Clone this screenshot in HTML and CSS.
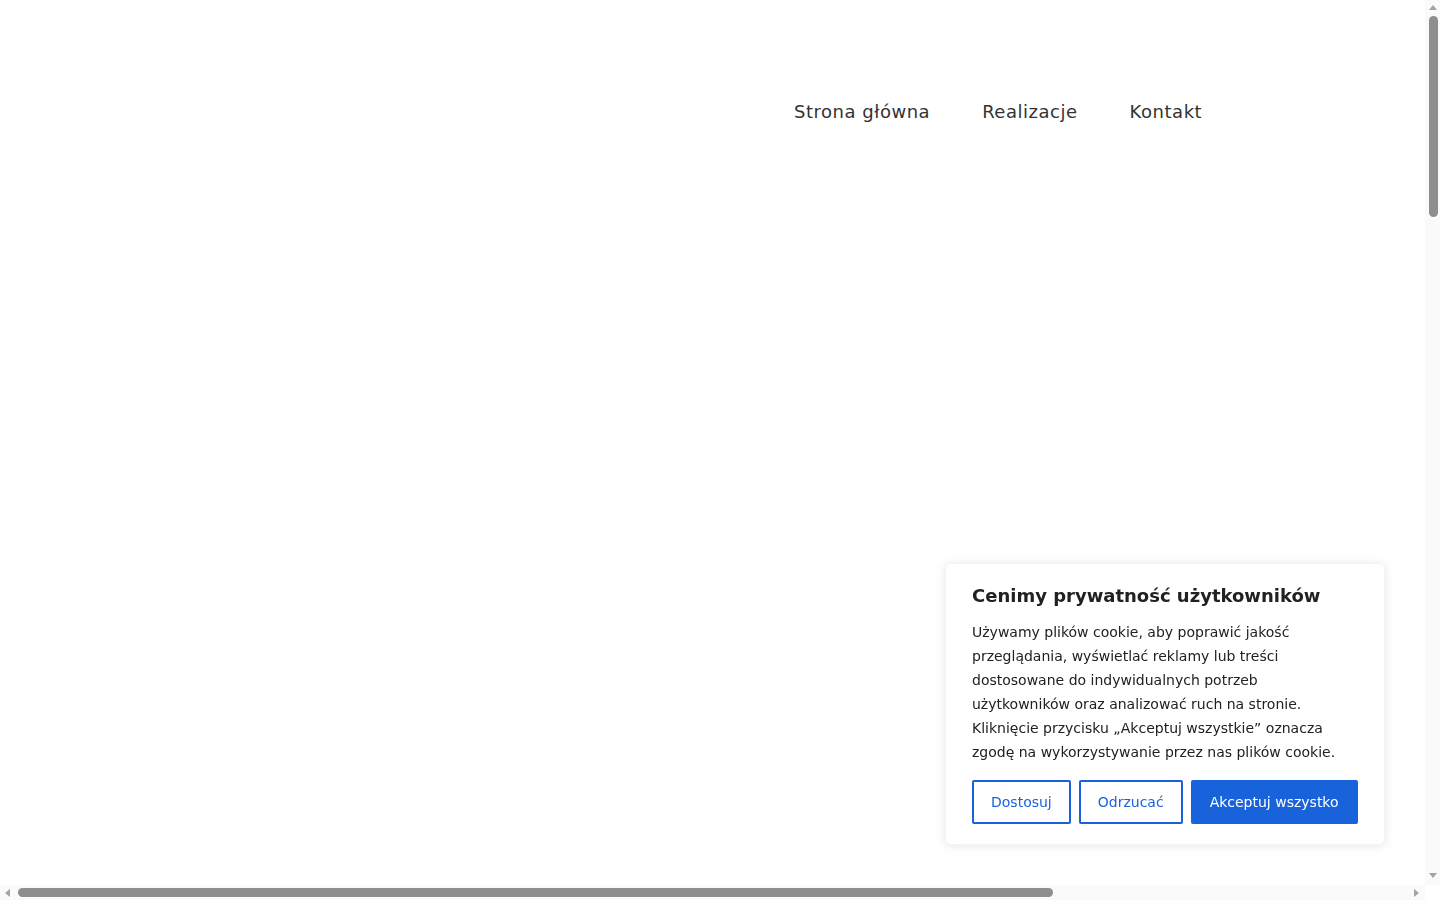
FILE: index.html
```html
<!DOCTYPE html>
<html lang="pl">
<head>
<meta charset="utf-8">
<title>Strona główna</title>
<link rel="stylesheet" href="styles.css">
</head>
<body>
<div class="page">
  <header class="site-header">
    <div class="logo"></div>
    <nav class="main-nav">
      <a href="#" class="nav-link">Strona główna</a>
      <a href="#" class="nav-link">Realizacje</a>
      <a href="#" class="nav-link">Kontakt</a>
    </nav>
  </header>
  <main class="content"></main>
</div>

<div class="cookie-banner">
  <h2 class="cookie-title">Cenimy prywatność użytkowników</h2>
  <p class="cookie-text">Używamy plików cookie, aby poprawić jakość przeglądania, wyświetlać reklamy lub treści dostosowane do indywidualnych potrzeb użytkowników oraz analizować ruch na stronie. Kliknięcie przycisku „Akceptuj wszystkie” oznacza zgodę na wykorzystywanie przez nas plików cookie.</p>
  <div class="cookie-buttons">
    <button class="btn btn-outline btn-customize">Dostosuj</button>
    <button class="btn btn-outline btn-reject">Odrzucać</button>
    <button class="btn btn-solid">Akceptuj wszystko</button>
  </div>
</div>

<div class="scrollbar scrollbar-v">
  <span class="arrow arrow-up"></span>
  <span class="thumb thumb-v"></span>
  <span class="arrow arrow-down"></span>
</div>
<div class="scrollbar scrollbar-h">
  <span class="arrow arrow-left"></span>
  <span class="thumb thumb-h"></span>
  <span class="arrow arrow-right"></span>
</div>
<div class="scroll-corner"></div>
</body>
</html>
```
FILE: styles.css
```css
html, body {
  margin: 0;
  padding: 0;
  background: #ffffff;
  font-family: "DejaVu Sans", "Noto Sans", sans-serif;
  overflow: hidden;
}

.page {
  width: 100%;
  height: 900px;
}

.site-header {
  display: flex;
  align-items: center;
  height: 224px;
  padding-left: 768px;
  box-sizing: border-box;
}

.logo {
  display: none;
}

.main-nav {
  display: flex;
  align-items: center;
}

.nav-link {
  display: block;
  padding: 0 26px;
  font-size: 18px;
  line-height: 24px;
  color: #333333;
  text-decoration: none;
  letter-spacing: 0.52px;
}

.content {
  display: block;
}

.cookie-banner {
  position: fixed;
  right: 55px;
  bottom: 55px;
  width: 440px;
  box-sizing: border-box;
  padding: 20px 26px 20px 26px;
  background: #ffffff;
  border: 1px solid #f4f4f4;
  border-radius: 6px;
  box-shadow: 0 1px 10px 0 rgba(172, 171, 171, 0.3);
  color: #212121;
}

.cookie-title {
  margin: 0 0 12px 0;
  font-size: 18px;
  line-height: 24px;
  font-weight: 700;
  color: #212121;
}

.cookie-text {
  margin: 0 0 16px 0;
  font-size: 14px;
  line-height: 24px;
  color: #212121;
}

.cookie-buttons {
  display: flex;
  gap: 8px;
}

.btn {
  height: 44px;
  box-sizing: border-box;
  padding: 0 17px;
  font-family: "DejaVu Sans", "Noto Sans", sans-serif;
  font-size: 14px;
  border: 2px solid #1863dc;
  border-radius: 2px;
  cursor: pointer;
}

.btn-outline {
  background: #ffffff;
  color: #1863dc;
}

.btn-solid {
  background: #1863dc;
  color: #ffffff;
}

/* fake browser scrollbars (overlay) */
.scrollbar {
  position: fixed;
  background: #fafafa;
  display: flex;
  align-items: center;
  box-sizing: border-box;
}

.scrollbar-v {
  top: 0;
  right: 0;
  width: 15px;
  height: 885px;
  flex-direction: column;
  padding: 5px 0 7px 0;
}

.scrollbar-h {
  left: 0;
  bottom: 0;
  width: 1425px;
  height: 15px;
  flex-direction: row;
  padding: 0 6px 0 5px;
}

.scroll-corner {
  position: fixed;
  right: 0;
  bottom: 0;
  width: 15px;
  height: 15px;
  background: #ffffff;
}

.thumb {
  display: block;
  background: #8e8e8e;
  border-radius: 5px;
}

.thumb-v {
  width: 9px;
  height: 201px;
  margin-top: 6px;
  margin-left: 1px;
}

.thumb-h {
  height: 9px;
  width: 1035px;
  margin-left: 8px;
}

.arrow {
  display: block;
  width: 0;
  height: 0;
}

.arrow-up {
  border-left: 4px solid transparent;
  border-right: 4px solid transparent;
  border-bottom: 5px solid #a3a3a3;
}

.arrow-down {
  margin-top: auto;
  border-left: 4px solid transparent;
  border-right: 4px solid transparent;
  border-top: 5px solid #a3a3a3;
}

.arrow-left {
  border-top: 4px solid transparent;
  border-bottom: 4px solid transparent;
  border-right: 5px solid #a3a3a3;
}

.arrow-right {
  margin-left: auto;
  border-top: 4px solid transparent;
  border-bottom: 4px solid transparent;
  border-left: 5px solid #a3a3a3;
}
```
